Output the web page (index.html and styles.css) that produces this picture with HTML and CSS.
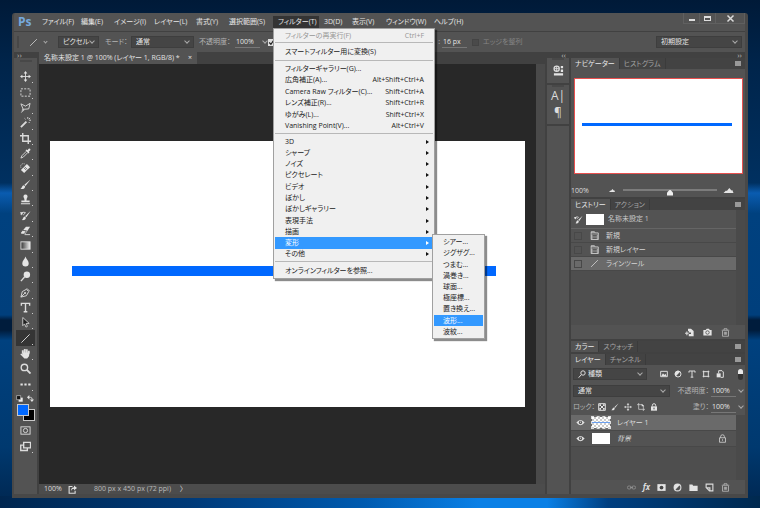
FILE: index.html
```html
<!DOCTYPE html>
<html>
<head>
<meta charset="utf-8">
<title>Ps</title>
<link rel="stylesheet" href="styles.css">
</head>
<body>
<svg class="defs" aria-hidden="true">
  <symbol id="move" viewBox="0 0 12 12"><path d="M6 2v8M2 6h8" class="s"/><path d="M6 0l2 2.6H4zM6 12l2-2.6H4zM0 6l2.6-2v4zM12 6L9.400 4v4z" class="f"/></symbol>
  <symbol id="marquee" viewBox="0 0 12 12"><rect x="1" y="2" width="10" height="8" class="s" stroke-dasharray="2.2 1.4"/></symbol>
  <symbol id="lasso" viewBox="0 0 12 12"><path d="M3.500 8L1 2l5 2.500L11 1.500 9.500 7.500 3.500 8c-1.500 0-1.500 2 0 1.500s0-1.500-.5-1.500M3 9.500L1.500 11.500" class="s"/></symbol>
  <symbol id="wand" viewBox="0 0 12 12"><path d="M1 11l6-6" class="s b"/><path d="M8.500 0v2M10 3.500h2M5 1.500l1 1M11 1l-1.500 1.500M9.500 5.500l1 1" class="s"/></symbol>
  <symbol id="crop" viewBox="0 0 12 12"><path d="M3 0v9h9M0 3h9v9" class="s m"/></symbol>
  <symbol id="dropper" viewBox="0 0 12 12"><path d="M7 3.500L2 8.500 1 11l2.500-1 5-5" class="s"/><path d="M6 2.500l1-.8L8 2.500 9.500.8c1-.8 2.500.7 1.700 1.700L9.500 4l.8 1-1 1z" class="f"/></symbol>
  <symbol id="heal" viewBox="0 0 12 12"><path d="M1 7.500L7.500 1 11 4.500 4.500 11z" class="f"/><path d="M4 5l3 3M5 4l3 3" stroke="#535353" stroke-width=".8"/><path d="M1 5a3 3 0 0 1 4-4" class="s" stroke-dasharray="1 1"/></symbol>
  <symbol id="brush" viewBox="0 0 12 12"><path d="M11.500.5L6 7.500 4.800 6.300z" class="f"/><path d="M4.300 6.800l1.400 1.400C5.500 10.500 3 11.500.5 10.800 2.300 10 2 7 4.300 6.800z" class="f"/></symbol>
  <symbol id="stamp" viewBox="0 0 12 12"><path d="M6 .5a2.300 2.300 0 0 1 1.500 4L7 7h3.500v2h-9V7H5l-.5-2.500A2.300 2.300 0 0 1 6 .5zM1 10h10v1.200H1z" class="f"/></symbol>
  <symbol id="hbrush" viewBox="0 0 12 12"><path d="M11.500 1L7 8 5.500 6.800z" class="f"/><path d="M5 7l1.500 1.500C6 11 3.500 11.500 2 11c1.500-1 1-3.500 3-4z" class="f"/><path d="M1 5c0-2 3-3.500 5-2L3.500 5.500" class="s"/><path d="M0 2.500h3.500L2 6z" class="f"/></symbol>
  <symbol id="eraser" viewBox="0 0 12 12"><path d="M1 8.500L6.500 2h4.500L6 9.500H1.500z" class="f"/><path d="M3 6l4 .3-2 3" stroke="#535353" fill="none"/><path d="M5 10.500h6" class="s"/></symbol>
  <symbol id="gradient" viewBox="0 0 12 12"><defs><linearGradient id="g"><stop stop-color="#333"/><stop offset="1" stop-color="#eee"/></linearGradient></defs><rect x="1" y="2" width="10" height="8" fill="url(#g)" stroke="#ddd"/></symbol>
  <symbol id="blur" viewBox="0 0 12 12"><path d="M6 .5C7 4 9.500 5 9.500 8a3.500 3.500 0 0 1-7 0C2.500 5 5 4 6 .5z" class="f"/></symbol>
  <symbol id="dodge" viewBox="0 0 12 12"><circle cx="7.500" cy="4" r="3.500" class="f"/><path d="M5 6.500L1 11" class="s m"/></symbol>
  <symbol id="pen" viewBox="0 0 12 12"><path d="M1 11l1.500-6L7 2.500 9.500 5 7 9.500zM1 11l4-4M7.500 1.500L10.500 4.500" class="s"/><circle cx="5.500" cy="6.500" r="1" class="f"/></symbol>
  <symbol id="type" viewBox="0 0 12 12"><path d="M1.500 4V1.500h9V4M6 1.500V11M4 10.700h4" class="s m"/></symbol>
  <symbol id="select" viewBox="0 0 12 12"><path d="M3 .5v9l2-2L6.500 11 8 10.300 6.800 7H10z" fill="#222" stroke="#ddd" stroke-width=".9"/></symbol>
  <symbol id="line" viewBox="0 0 12 12"><path d="M1.500 10.500l9-9" class="s"/></symbol>
  <symbol id="hand" viewBox="0 0 12 12"><path d="M3 6V2.500M5.200 5.500V1M7.400 5.500V1.300M9.600 6V3" class="s b"/><path d="M2.200 5h8.200l-.6 4-2 2.500h-3L.3 6.800 1.300 6l1.500 1z" class="f"/></symbol>
  <symbol id="zoom" viewBox="0 0 12 12"><circle cx="4.800" cy="4.800" r="3.500" class="s m"/><path d="M7.500 7.500l4 4" class="s b"/></symbol>
  <symbol id="dots" viewBox="0 0 12 12"><path d="M.5 5H3v2H.5zM4.800 5h2.400v2H4.800zM9 5h2.500v2H9z" class="f"/></symbol>
  <symbol id="mask" viewBox="0 0 12 12"><rect x="1" y="2" width="10" height="8" class="s"/><circle cx="6" cy="6" r="2.300" class="s"/></symbol>
  <symbol id="screens" viewBox="0 0 12 12"><path d="M4 1.500h7.500v6H4zM4 4.500H.8v5.800H8V7.500" class="s m"/></symbol>
  <symbol id="swap" viewBox="0 0 12 12"><path d="M3 4h3q3 0 3 4" class="s m"/><path d="M0 4l4-4v8zM5 7.500h7L8.500 12z" class="f"/></symbol>
  <symbol id="defcol" viewBox="0 0 12 12"><path d="M4.500 4.500h7v7h-7z" fill="#eee"/><path d="M1 1h7v7H1z" fill="#111" stroke="#ddd"/></symbol>
  <symbol id="share" viewBox="0 0 12 12"><path d="M6 2H1.500v9h8V7.500" class="s m"/><path d="M4 8c0-4 2-5 4-5V.5L12 4 8 7V5C6 5 5 6 4 8z" class="f"/></symbol>
  <symbol id="props" viewBox="0 0 12 12"><circle cx="4" cy="4" r="2.800" class="s m"/><path d="M4 1v6M1.500 4h5" class="s"/><path d="M8.500 1H11v2.500H8.500zM8.500 5H11v2.500H8.500zM1 9h10v2.500H1z" class="f"/></symbol>
  <symbol id="snapshot" viewBox="0 0 12 12"><path d="M1 2.500h2.500L5 1h3l1 1.500h2.500V10H.5V2.500z" class="f"/><circle cx="6" cy="6" r="2.300" fill="#e4e4e4" stroke="#444"/></symbol>
  <symbol id="newdoc" viewBox="0 0 12 12"><path d="M4 1h4l3.500 3v7H5V8h3V6H5V4H4z" class="f"/><path d="M0 7h5M2.500 4.500v5" class="s m"/></symbol>
  <symbol id="trash" viewBox="0 0 12 12"><path d="M1 3h10M4 3V1h4v2M2 4v7h8V4M4.500 5v4M6 5v4M7.500 5v4" class="s"/></symbol>
  <symbol id="doc" viewBox="0 0 12 12"><path d="M1.500 1h4.500l1 1.500h4v9h-9.500z" fill="#9a9a9a" stroke="#ddd"/><path d="M2 4h8.500M3.500 6h5.500M3.500 8h5.500M3.500 10h5.500" stroke="#444"/></symbol>
  <symbol id="image" viewBox="0 0 12 12"><path d="M1 2h10v8H1z" class="s m"/><path d="M2 9l2.500-4 2 2.500L8 5.500 10 9z" class="f"/></symbol>
  <symbol id="adjust" viewBox="0 0 12 12"><circle cx="6" cy="6" r="4.500" class="s m"/><path d="M2.800 9.200A4.500 4.500 0 0 1 9.200 2.800z" class="f"/></symbol>
  <symbol id="shape" viewBox="0 0 12 12"><path d="M2.500 1v10M9.500 1v10M1 2.500h10M1 9.500h10" class="s m"/></symbol>
  <symbol id="smart" viewBox="0 0 12 12"><path d="M4 5V1h5l2 2v8H7" class="s m"/><path d="M1 5h6v6H1z" class="f"/></symbol>
  <symbol id="checker" viewBox="0 0 12 12"><path d="M1 1h10v10H1z" class="s m"/><path d="M2 2h2.500v2.500H2zM7.500 2H10v2.500H7.500zM4.500 4.500h3v3h-3zM2 7.500h2.500V10H2zM7.500 7.500H10V10H7.500z" class="f"/></symbol>
  <symbol id="artboard" viewBox="0 0 12 12"><path d="M2.500 0v9.500H12M0 2.500h8l1.500 1.500v8" class="s"/><path d="M7 1l4 4H7z" class="f"/></symbol>
  <symbol id="lock" viewBox="0 0 12 12"><path d="M1.500 5h9v6.500h-9z" class="f"/><path d="M3.500 5V3.500a2.500 2.500 0 0 1 5 0V5" class="s m"/><path d="M6 7v2.500" stroke="#444" stroke-width="1.500"/></symbol>
  <symbol id="lock2" viewBox="0 0 12 12"><path d="M2 5h8v6H2zM3.500 5V3.500a2.500 2.500 0 0 1 5 0V5M6 7v2" class="s"/></symbol>
  <symbol id="eye" viewBox="0 0 12 12"><path d="M.5 6Q6-1 11.500 6 6 13 .5 6z" class="f"/><circle cx="6" cy="6" r="2.200" fill="#555"/><circle cx="6" cy="5.500" r=".8" class="f"/></symbol>
  <symbol id="link" viewBox="0 0 12 12"><rect x=".5" y="4" width="5" height="4" rx="2" class="s"/><rect x="6.500" y="4" width="5" height="4" rx="2" class="s"/><path d="M4 6h4" class="s"/></symbol>
  <symbol id="addmask" viewBox="0 0 12 12"><path d="M.5 1.500h11v9H.5z" class="f"/><circle cx="6" cy="6" r="2.500" fill="#444"/></symbol>
  <symbol id="folder" viewBox="0 0 12 12"><path d="M.5 2h4l1 1.500h6v7H.5z" class="f"/></symbol>
  <symbol id="page" viewBox="0 0 12 12"><path d="M1.500 1.500h9v9H6L1.500 6zM2 6.500h4.500V10" class="s m"/></symbol>
  <symbol id="search" viewBox="0 0 12 12"><circle cx="7.500" cy="4.500" r="3.300" class="s m"/><path d="M5 7l-4 4.500" class="s m"/></symbol>
  <symbol id="tick" viewBox="0 0 12 12"><path d="M2 6l3 3 5-7" fill="none" stroke="#222" stroke-width="2"/></symbol>
  <symbol id="hill" viewBox="0 0 12 6"><path d="M0 6l3-3 1 .7L7 0l2.500 3 1-.5L12 6z" class="f"/></symbol>
</svg>

<main class="window">
  <header class="menubar">
    <span class="logo">Ps</span>
    <nav class="menus">
      <button>ファイル(F)</button>
      <button>編集(E)</button>
      <button>イメージ(I)</button>
      <button>レイヤー(L)</button>
      <button>書式(Y)</button>
      <button>選択範囲(S)</button>
      <div class="open">
        <button class="active">フィルター(T)</button>
        <div class="menu">
          <ul><li class="off"><span>フィルターの再実行(F)</span><kbd>Ctrl+F</kbd></li></ul>
          <ul class="tall"><li>スマートフィルター用に変換(S)</li></ul>
          <ul class="six">
            <li>フィルターギャラリー(G)...</li>
            <li><span>広角補正(A)...</span><kbd>Alt+Shift+Ctrl+A</kbd></li>
            <li><span>Camera Raw フィルター(C)...</span><kbd>Shift+Ctrl+A</kbd></li>
            <li><span>レンズ補正(R)...</span><kbd>Shift+Ctrl+R</kbd></li>
            <li><span>ゆがみ(L)...</span><kbd>Shift+Ctrl+X</kbd></li>
            <li><span>Vanishing Point(V)...</span><kbd>Alt+Ctrl+V</kbd></li>
          </ul>
          <ul class="eleven">
            <li class="sub">3D</li>
            <li class="sub">シャープ</li>
            <li class="sub">ノイズ</li>
            <li class="sub">ピクセレート</li>
            <li class="sub">ビデオ</li>
            <li class="sub">ぼかし</li>
            <li class="sub">ぼかしギャラリー</li>
            <li class="sub">表現手法</li>
            <li class="sub">描画</li>
            <li class="sub on">変形
              <div class="menu submenu">
                <ul>
                  <li>シアー...</li>
                  <li>ジグザグ...</li>
                  <li>つまむ...</li>
                  <li>渦巻き...</li>
                  <li>球面...</li>
                  <li>極座標...</li>
                  <li>置き換え...</li>
                  <li class="on">波形...</li>
                  <li>波紋...</li>
                </ul>
              </div>
            </li>
            <li class="sub">その他</li>
          </ul>
          <ul class="tall last"><li>オンラインフィルターを参照...</li></ul>
        </div>
      </div>
      <button>3D(D)</button>
      <button>表示(V)</button>
      <button>ウィンドウ(W)</button>
      <button>ヘルプ(H)</button>
    </nav>
    <div class="winbtns">
      <button aria-label="最小化"><i class="min"></i></button>
      <button aria-label="最大化"><i class="max"></i></button>
      <button aria-label="閉じる" class="close"><svg viewBox="0 0 12 12"><path d="M2 2l8 8M10 2l-8 8" class="s b"/></svg></button>
    </div>
  </header>

  <section class="options">
    <i class="grip"></i>
    <button class="preset" aria-label="ライン"><svg><use href="#line"/></svg></button>
    <i class="chev"></i>
    <span class="pick w-mode"><select aria-label="ツールモード"><option>ピクセル</option></select></span>
    <label class="dim l-mode" for="mode">モード：</label>
    <span class="pick w-blend"><select id="mode"><option>通常</option></select></span>
    <label class="dim l-op" for="op">不透明度：</label>
    <span class="num"><input id="op" value="100%"></span>
    <span class="checked"><input class="check" type="checkbox" checked aria-label="アンチエイリアス"><svg><use href="#tick"/></svg></span>
    <label class="dim l-width" for="lw">:</label>
    <span class="num w-px"><input id="lw" value="16 px"></span>
    <input class="check off" type="checkbox" id="edge" disabled>
    <label class="faint" for="edge">エッジを整列</label>
    <span class="pick w-space"><select aria-label="ワークスペース"><option>初期設定</option></select></span>
  </section>

  <div class="work">
    <aside class="tools">
      <div class="strip left">››</div>
      <div class="toolbox">
        <i class="handle"></i>
        <div class="toollist">
          <button aria-label="移動"><svg><use href="#move"/></svg></button>
          <button aria-label="選択"><svg><use href="#marquee"/></svg></button>
          <button aria-label="なげなわ"><svg><use href="#lasso"/></svg></button>
          <button aria-label="自動選択"><svg><use href="#wand"/></svg></button>
          <button aria-label="切り抜き"><svg><use href="#crop"/></svg></button>
          <button aria-label="スポイト"><svg><use href="#dropper"/></svg></button>
          <button aria-label="修復"><svg><use href="#heal"/></svg></button>
          <button aria-label="ブラシ"><svg><use href="#brush"/></svg></button>
          <button aria-label="スタンプ"><svg><use href="#stamp"/></svg></button>
          <button aria-label="ヒストリーブラシ"><svg><use href="#hbrush"/></svg></button>
          <button aria-label="消しゴム"><svg><use href="#eraser"/></svg></button>
          <button aria-label="グラデーション"><svg><use href="#gradient"/></svg></button>
          <button aria-label="ぼかし"><svg><use href="#blur"/></svg></button>
          <button aria-label="覆い焼き"><svg><use href="#dodge"/></svg></button>
          <button aria-label="ペン"><svg><use href="#pen"/></svg></button>
          <button aria-label="文字"><svg><use href="#type"/></svg></button>
          <button aria-label="パス選択"><svg><use href="#select"/></svg></button>
          <button aria-label="ライン" class="active"><svg><use href="#line"/></svg></button>
          <button aria-label="手のひら"><svg><use href="#hand"/></svg></button>
          <button aria-label="ズーム" class="single"><svg><use href="#zoom"/></svg></button>
          <button aria-label="その他"><svg><use href="#dots"/></svg></button>
        </div>
        <div class="colorbtns">
          <button aria-label="初期設定の色"><svg><use href="#defcol"/></svg></button>
          <button aria-label="色を入れ替え"><svg><use href="#swap"/></svg></button>
        </div>
        <div class="swatches"><i class="fg"></i><i class="bg"></i></div>
        <div class="toolend">
          <button aria-label="クイックマスク" class="single"><svg><use href="#mask"/></svg></button>
          <button aria-label="スクリーンモード"><svg><use href="#screens"/></svg></button>
        </div>
      </div>
    </aside>

    <section class="document">
      <div class="doctabs"><div class="doctab"><span>名称未設定 1 @ 100% (レイヤー 1, RGB/8) *</span><button aria-label="閉じる">×</button></div></div>
      <div class="stage">
        <div class="pasteboard"><div class="canvas"><i class="stroke"></i></div></div>
        <i class="scroll"></i>
      </div>
      <footer class="status"><span class="zoomval">100%</span><svg><use href="#share"/></svg><span class="size">800 px x 450 px (72 ppi)</span><span class="more">〉</span></footer>
    </section>

    <aside class="dock">
      <div class="strip">‹‹</div>
      <div class="dockgroup"><i class="handle"></i><button aria-label="属性"><svg><use href="#props"/></svg></button></div>
      <div class="dockgroup"><i class="handle"></i><button class="glyph">A|</button><button class="glyph">¶</button></div>
      <div class="dockgroup rest"></div>
    </aside>

    <aside class="panels">
      <div class="strip">››</div>
      <section class="panel">
        <div class="tabs"><button class="active">ナビゲーター</button><button>ヒストグラム</button><i class="burger"></i></div>
        <div class="preview"><i class="stroke"></i></div>
        <div class="zoombar"><span>100%</span><svg class="hill"><use href="#hill"/></svg><input type="range" value="50" aria-label="ズーム"><svg class="hill big"><use href="#hill"/></svg></div>
      </section>
      <section class="panel history">
        <div class="tabs"><button class="active">ヒストリー</button><button>アクション</button><i class="burger"></i></div>
        <div class="scrolled">
          <div class="list">
            <div class="snap"><svg><use href="#hbrush"/></svg><i class="thumb"></i><span>名称未設定 1</span></div>
            <div class="state"><i class="box"></i><svg><use href="#doc"/></svg><span>新規</span></div>
            <div class="state"><i class="box"></i><svg><use href="#doc"/></svg><span>新規レイヤー</span></div>
            <div class="state on"><i class="box"></i><svg><use href="#line"/></svg><span>ラインツール</span></div>
          </div>
        </div>
        <div class="actions"><svg><use href="#newdoc"/></svg><svg><use href="#snapshot"/></svg><svg class="soft"><use href="#trash"/></svg></div>
      </section>
      <section class="panel">
        <div class="tabs"><button class="active">カラー</button><button>スウォッチ</button><i class="burger"></i></div>
      </section>
      <section class="panel layers">
        <div class="tabs"><button class="active">レイヤー</button><button>チャンネル</button><i class="burger"></i></div>
        <div class="row filter">
          <span class="pick find"><svg><use href="#search"/></svg><select aria-label="フィルターの種類"><option>種類</option></select></span>
          <svg><use href="#image"/></svg><svg><use href="#adjust"/></svg><svg><use href="#type"/></svg><svg><use href="#shape"/></svg><svg><use href="#smart"/></svg>
          <i class="switch"></i>
        </div>
        <div class="row blend">
          <span class="pick"><select aria-label="描画モード"><option>通常</option></select></span>
          <label class="dim" for="lop">不透明度：</label><span class="num"><input id="lop" value="100%"></span>
        </div>
        <div class="row locks">
          <span class="dim locklabel">ロック：</span><svg><use href="#checker"/></svg><svg><use href="#brush"/></svg><svg><use href="#move"/></svg><svg><use href="#artboard"/></svg><svg><use href="#lock"/></svg>
          <label class="dim fill" for="lfill">塗り：</label><span class="num"><input id="lfill" value="100%"></span>
        </div>
        <div class="scrolled">
          <div class="list">
            <div class="layer on"><svg><use href="#eye"/></svg><i class="thumb clear"></i><span>レイヤー 1</span></div>
            <div class="layer"><svg><use href="#eye"/></svg><i class="thumb"></i><em>背景</em><svg class="end"><use href="#lock2"/></svg></div>
          </div>
        </div>
        <div class="actions"><svg class="faded"><use href="#link"/></svg><b class="fx">fx</b><svg><use href="#addmask"/></svg><svg><use href="#adjust"/></svg><svg><use href="#folder"/></svg><svg><use href="#page"/></svg><svg class="soft"><use href="#trash"/></svg></div>
      </section>
    </aside>
  </div>
</main>
</body>
</html>
```
FILE: styles.css
```css
* { box-sizing: border-box; }
body {
  margin: 0;
  height: 100vh;
  padding: 13px 12px 10px;
  font: 7px/10px "Open Sans", "Noto Sans CJK JP", sans-serif;
  font-feature-settings: "palt";
  color: #ddd;
  overflow: hidden;
  background:
    linear-gradient(to right, #00264f 0, #003a78 25%, #005bb0 48%, #0a80e6 63%, #0a80e6 72%, #003f80 80%, #00294f 100%) bottom / 100% 12px no-repeat,
    linear-gradient(to bottom, #001a38 0, #00244a 12%, #003060 36%, #0a5cb0 38%, #00417f 42%, #003f7c 62%, #001c3c 63%, #001c3c 65%, #00417f 67%, #00396f 88%, #00264f 100%);
}
button, input, select { font: inherit; font-feature-settings: inherit; color: inherit; margin: 0; padding: 0; border: 0; background: none; border-radius: 0; outline: 0; }
button { display: block; white-space: nowrap; }
select { appearance: none; width: 100%; }
ul { list-style: none; margin: 0; padding: 0; }
i { display: block; flex: none; }
span, label, em { white-space: nowrap; }
svg { display: block; flex: none; width: 9px; height: 9px; }
.defs { position: absolute; width: 0; height: 0; }
.s { fill: none; stroke: #dcdcdc; stroke-width: 1; }
.m { stroke-width: 1.500; }
.b { stroke-width: 2; }
.f { fill: #e4e4e4; }
.dim { color: #b4b4b4; }
.faint { color: #858585; }

.window { height: 100%; display: flex; flex-direction: column; background: #535353; border: 2px solid #484848; border-width: 0 3px 4px 2px; border-radius: 3px 3px 0 0; }

.menubar { height: 19px; flex: none; display: flex; border-bottom: 1px solid #414141; }
.logo { width: 23px; padding-left: 4px; font: bold 12px/17px "Open Sans", sans-serif; color: #76a9dc; }
.menus { display: grid; grid-template-columns: 39px 33px 40px 42px 33px 49px 46px 28px 34px 48px 40px; align-items: center; }
.menus button { text-align: left; padding-left: 5px; color: #e6e6e6; line-height: 12px; }
.open { position: relative; }
.menus .active { width: 46px; background: #343434; }
.winbtns { margin-left: auto; height: 11px; display: flex; border: 1px solid #606060; border-top: 0; }
.winbtns button { width: 16px; display: grid; place-items: center; border-right: 1px solid #606060; }
.winbtns .close { width: 28px; border: 0; }
.min { width: 6px; height: 2px; margin-top: 3px; background: #ddd; }
.max { width: 7px; height: 5px; border: 1px solid #ddd; border-top-width: 2px; }

.menu { position: absolute; z-index: 5; top: 12px; left: 0; width: 162px; padding: 1px; background: #f0f0f0; border: 1px solid #a0a0a0; box-shadow: 2px 2px 1px rgba(0,0,0,.45); color: #1a1a1a; }
.menu ul { display: grid; grid-template-columns: minmax(0, 1fr); grid-auto-rows: 1fr; height: 11px; }
.menu ul + ul { border-top: 1px solid #b8b8b8; margin-top: 1px; padding-top: 2px; }
.menu .tall { height: 17px; }
.menu .six { height: 72px; }
.menu .eleven { height: 127px; }
.menu .last { height: 16px; }
.menu li { display: flex; align-items: center; justify-content: space-between; padding: 0 9px 0 10px; white-space: nowrap; min-height: 0; }
.menu .off { color: #969696; }
.menu kbd { font: inherit; }
.menu .on { background: #3399ff; color: #fff; }
.menu .sub { position: relative; padding-right: 4px; }
.sub::after { content: ""; border: 2px solid transparent; border-left: 3px solid #111; border-right: 0; }
.sub.on::after { border-left-color: #fff; }
.menu.submenu { top: -3px; left: 157px; width: 53px; padding: 1px; }
.menu .submenu ul { height: 101px; border: 0; }
.menu .submenu li { padding: 0 9px; }

.options { height: 20px; flex: none; display: flex; align-items: center; }
.grip { width: 2px; height: 12px; margin: 0 10px 0 3px; border: 1px solid #474747; }
.chev, .pick::after, .num::after { content: ""; width: 3px; height: 3px; border: solid #aaa; border-width: 0 1px 1px 0; rotate: 45deg; margin-top: -2px; flex: none; }
.chev { margin: -2px 11px 0 6px; }
.pick { display: flex; align-items: center; height: 12px; padding: 0 4px; background: #454545; border: 1px solid #3e3e3e; color: #e4e4e4; }
.w-mode { width: 41px; }
.l-mode { width: 32px; padding-left: 6px; }
.w-blend { width: 63px; }
.l-op { width: 41px; padding-left: 5px; }
.num { display: flex; align-items: center; width: 32px; }
.num input { width: 25px; padding-left: 1px; border-bottom: 1px solid #777; margin-right: 3px; color: #e4e4e4; }
.check { appearance: none; display: block; width: 7px; height: 7px; background: #ddd; }
.checked { position: relative; margin-left: 1px; }
.checked svg { position: absolute; inset: 0; width: 7px; height: 7px; }
.check.off { background: #4a4a4a; border: 1px solid #444; margin: 0 4px 0 2px; }
.l-width { width: 167px; text-align: right; padding-right: 2px; }
.w-px { width: 28px; }
.w-px::after { display: none; }
.w-space { width: 86px; margin: 0 3px 0 auto; }

.work { flex: 1; min-height: 0; display: flex; background: #414141; }
.strip { height: 6px; flex: none; padding-right: 3px; text-align: right; font-size: 8px; line-height: 5px; color: #bbb; }
.strip.left { text-align: left; padding-left: 3px; }
.handle { width: 12px; height: 2px; margin: 2px auto 0; background: #484848; }
.tools { width: 23px; flex: none; display: flex; flex-direction: column; }
.toolbox { flex: 1; background: #535353; }
.toollist { height: 323px; margin-top: 7px; display: grid; grid-auto-rows: 1fr; }
.tools button { position: relative; width: 100%; display: grid; place-items: center; }
.toollist svg, .toolend svg { width: 11px; height: 11px; }
.toollist button::after, .toolend button::after { content: ""; position: absolute; right: 4px; bottom: 1px; width: 1px; height: 1px; background: #ccc; }
.tools .single::after { display: none; }
.toollist .active { width: 19px; margin: 0 auto; background: #353535; }
.toollist .active::after { right: 2px; }
.colorbtns { display: grid; grid-template-columns: 11px 11px; height: 12px; align-items: center; }
.colorbtns svg { width: 7px; height: 7px; }
.swatches { position: relative; height: 19px; margin-left: 3px; }
.swatches i { position: absolute; width: 12px; height: 12px; border: 1px solid #c8c8c8; }
.fg { z-index: 1; background: #0068ff; }
.bg { left: 6px; top: 5px; background: #000; }
.toolend { height: 31px; display: grid; grid-auto-rows: 1fr; }

.document { flex: 1; min-width: 0; margin: 0 2px; display: flex; flex-direction: column; }
.doctabs { height: 12px; flex: none; display: flex; }
.doctab { width: 158px; padding: 0 5px; display: flex; align-items: center; justify-content: space-between; background: #535353; color: #e2e2e2; }
.stage { flex: 1; min-height: 0; display: flex; }
.pasteboard { flex: 1; display: flex; align-items: center; justify-content: center; background: #282828; }
.canvas { position: relative; width: 95.4%; aspect-ratio: 800 / 450; background: #fff; }
.stroke { position: absolute; left: 4.6%; right: 6%; top: 47%; height: 10px; background: #0068ff; }
.scroll { width: 9px; background: #4a4a4a; }
.status { height: 10px; flex: none; display: flex; align-items: center; background: #4c4c4c; }
.zoomval { width: 29px; padding-left: 5px; }
.status .size { width: 86px; margin-left: 17px; color: #bbb; }

.dock { width: 22px; flex: none; display: flex; flex-direction: column; margin-right: 2px; }
.dockgroup { background: #535353; margin-bottom: 2px; padding-bottom: 3px; }
.dockgroup .handle { margin: 0 auto; }
.dockgroup button { display: grid; place-items: center; width: 100%; height: 20px; }
.dockgroup svg { width: 11px; height: 11px; }
.dockgroup .glyph { height: 17px; font-size: 12px; line-height: 14px; }
.dockgroup.rest { flex: 1; margin: 0; }

.panels { width: 174px; flex: none; display: flex; flex-direction: column; }
.panel { margin-bottom: 2px; background: #535353; }
.tabs { height: 11px; display: flex; background: #434343; color: #a4a4a4; }
.tabs button { padding: 0 4px; border-right: 1px solid #3b3b3b; line-height: 10px; }
.tabs .active { background: #535353; color: #e8e8e8; }
.burger { width: 6px; height: 5px; margin: 3px 4px 0 auto; background: #999; }
.preview { position: relative; height: 96px; margin: 9px 2px 0 3px; background: #fff; border: 1px solid #e8504f; }
.preview .stroke { height: 3px; left: 4%; right: 6%; }
.zoombar { height: 23px; padding-top: 10px; display: flex; align-items: center; }
.zoombar span { width: 38px; }
.hill { width: 6px; height: 3px; }
.hill.big { width: 11px; height: 5px; }
.zoombar input { appearance: none; width: 94px; height: 8px; margin: 0 6px 0 8px; background: linear-gradient(#7c7c7c, #7c7c7c) 0 2px / 100% 2px no-repeat; }
.zoombar input::-webkit-slider-thumb { appearance: none; width: 6px; height: 6px; margin-top: 4px; background: #eee; clip-path: polygon(50% 0, 100% 50%, 100% 100%, 0 100%, 0 50%); }
.history { height: 140px; display: flex; flex-direction: column; }
.scrolled { flex: 1; padding-right: 9px; background: #4a4a4a; }
.list { height: 100%; background: #4e4e4e; }
.snap { height: 19px; display: flex; align-items: center; padding-left: 3px; border-bottom: 1px solid #656565; background: #535353; color: #c8c8c8; }
.thumb { width: 18px; height: 11px; background: #fff; margin: 0 4px 0 3px; }
.state { height: 14px; display: flex; align-items: center; padding-left: 3px; border-bottom: 1px solid #484848; background: #535353; color: #d4d4d4; }
.state svg { margin: 0 7px 0 8px; }
.box { width: 8px; height: 8px; border: 1px solid #484848; }
.actions { height: 14px; display: flex; align-items: center; justify-content: flex-end; gap: 9px; padding-right: 15px; background: #535353; }
.soft { opacity: .8; }
.faded { opacity: .5; }
.layers { flex: 1; min-height: 0; display: flex; flex-direction: column; margin: 0; }
.row { height: 16px; display: flex; align-items: center; flex: none; padding-left: 2px; }
.filter { height: 18px; gap: 6px; }
.row svg { width: 8px; height: 8px; }
.find { width: 74px; margin-right: 7px; gap: 2px; }
.switch { width: 5px; height: 11px; margin: 0 2px 0 auto; border-radius: 3px; background: linear-gradient(#e8e8e8 5px, #333 5px); }
.blend .pick { width: 98px; }
.blend label { width: 39px; text-align: right; margin-left: auto; }
.locks { gap: 5px; }
.locklabel { width: 20px; }
.row .num { margin: 0 2px; }
.fill { margin-left: auto; }
.locks .num { margin-left: -3px; }
.layer { height: 16px; display: flex; align-items: center; padding-left: 5px; border-bottom: 1px solid #484848; background: #535353; color: #ddd; }
.layer .thumb { margin: 0 7px; }
.layer.on, .state.on { background: #6a6a6a; }
.clear { background: linear-gradient(transparent 5px, #6ba0f0 5px 6px, transparent 6px), repeating-conic-gradient(#ccc 0 25%, #fff 0 50%) 0 0 / 4px 4px; outline: 1px dashed #ddd; }
.layer .clear { background: linear-gradient(transparent 5px, #6ba0f0 5px 6px, transparent 6px), repeating-conic-gradient(#ccc 0 25%, #fff 0 50%) 0 0 / 4px 4px; }
.end { margin: 0 9px 0 auto; }
.fx { font: italic bold 8px/10px "Open Sans", sans-serif; }
.layers .actions { gap: 7px; }
```
